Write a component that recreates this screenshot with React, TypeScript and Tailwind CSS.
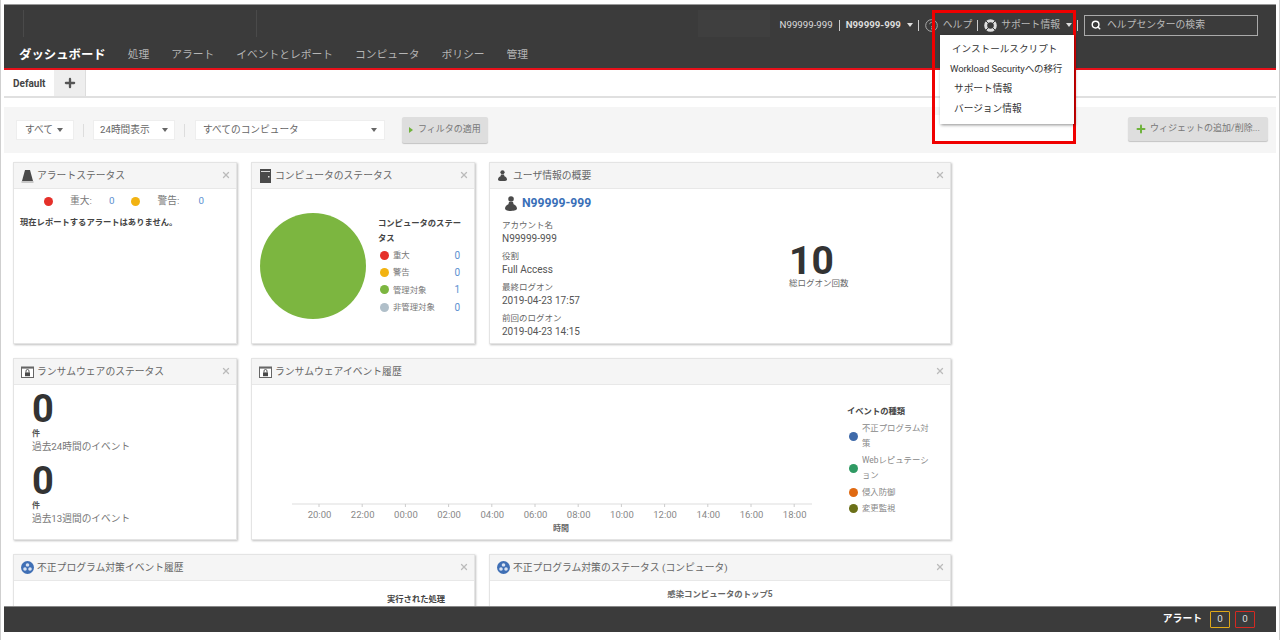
import React from "react";
import { Plus, Search, X } from "lucide-react";

const navItems = ["処理", "アラート", "イベントとレポート", "コンピュータ", "ポリシー", "管理"];
const hours = ["20:00", "22:00", "00:00", "02:00", "04:00", "06:00", "08:00", "10:00", "12:00", "14:00", "16:00", "18:00"];

const Caret = ({ className = "border-t-[#666]" }: { className?: string }) => (
  <span className={`inline-block w-0 h-0 border-x-[3.5px] border-x-transparent border-t-[4px] ${className}`} />
);

const Dot = ({ color, size = "w-[9px] h-[9px]" }: { color: string; size?: string }) => (
  <span className={`inline-block shrink-0 rounded-full ${size} ${color}`} />
);

const Sep = ({ className = "" }: { className?: string }) => (
  <span className={`w-px h-[11px] bg-[#ccc] ${className}`} />
);

const PersonIcon = ({ size = 14 }: { size?: number }) => (
  <svg width={size} height={size * 1.25} viewBox="0 0 12 15" fill="#4a4a4a">
    <circle cx="6" cy="3" r="2.8" />
    <path d="M4 6h4l.6 2.2C10.6 9 12 10.8 12 12.6 12 14.2 9.4 15 6 15s-6-.8-6-2.4c0-1.8 1.4-3.6 3.4-4.4z" />
  </svg>
);

const BellIcon = () => (
  <svg width="13" height="14" viewBox="0 0 13 14">
    <path d="M4 1h5l3 11H1z" fill="#4a4a4a" />
    <rect x="0.5" y="12.5" width="12" height="1" fill="#999" />
  </svg>
);

const ComputerIcon = () => (
  <svg width="11" height="14" viewBox="0 0 11 14">
    <rect width="11" height="14" fill="#4a4a4a" />
    <rect x="1" y="2" width="9" height="1" fill="#ddd" />
    <rect x="8" y="7" width="1.5" height="1.5" fill="#ddd" />
  </svg>
);

const LockIcon = () => (
  <svg width="13" height="12" viewBox="0 0 13 12">
    <rect x="0.5" y="1" width="12" height="10.5" fill="#fff" stroke="#666" />
    <rect x="0.5" y="1" width="12" height="1.6" fill="#666" />
    <rect x="4" y="6.4" width="5" height="3.8" fill="#4a4a4a" />
    <path d="M5 6.4V5a1.5 1.5 0 0 1 3 0v1.4" fill="none" stroke="#4a4a4a" strokeWidth="0.9" />
  </svg>
);

const BioIcon = () => (
  <svg width="13" height="13" viewBox="0 0 13 13">
    <circle cx="6.5" cy="6.5" r="6.5" fill="#3f6fb5" />
    <circle cx="6.5" cy="4" r="1.8" fill="#d8e2f2" />
    <circle cx="4" cy="8" r="1.8" fill="#d8e2f2" />
    <circle cx="9" cy="8" r="1.8" fill="#d8e2f2" />
    <circle cx="6.5" cy="6.6" r="0.9" fill="#3f6fb5" />
  </svg>
);

const LifeBuoyIcon = () => (
  <svg width="13" height="13" viewBox="0 0 13 13">
    <circle cx="6.5" cy="6.5" r="4.8" fill="none" stroke="#dedede" strokeWidth="3" />
    <path d="M2 2l2.8 2.8M11 2L8.2 4.8M2 11l2.8-2.8M11 11L8.2 8.2" stroke="#3b3b3b" strokeWidth="1" />
  </svg>
);

const HelpIcon = () => (
  <svg width="13" height="13" viewBox="0 0 13 13" fill="none" stroke="#aaa">
    <circle cx="6.5" cy="6.5" r="5.8" />
    <path d="M4.7 5.2a1.8 1.8 0 1 1 2.8 1.5c-.7.4-1 .8-1 1.6M6.5 9.3v1" />
  </svg>
);

const Widget = ({
  icon,
  title,
  className = "",
  children,
}: {
  icon: React.ReactNode;
  title: string;
  className?: string;
  children: React.ReactNode;
}) => (
  <div className={`flex flex-col bg-white border border-[#e4e4e4] shadow-[1px_1px_2px_rgba(0,0,0,0.25)] ${className}`}>
    <div className="flex items-center h-[26px] shrink-0 px-[7px] bg-[#f5f5f5] border-b border-[#e8e8e8]">
      <span className="flex justify-center items-center w-[13px] mr-[3px]">{icon}</span>
      <span className="pt-[1px] text-[9.8px] text-[#666]">{title}</span>
      <X size={10} strokeWidth={3} className="ml-auto mr-[-2px] mb-[2px] text-[#bbb]" />
    </div>
    {children}
  </div>
);

const LegendRow = ({ color, label, value }: { color: string; label: string; value: number }) => (
  <div className="flex items-center h-[17.4px] pl-[2px]">
    <Dot color={color} />
    <span className="ml-[4px] text-[8.4px] text-[#777]">{label}</span>
    <span className="ml-auto text-[10px] text-[#5b8fd0]">{value}</span>
  </div>
);

const EventLegend = ({ color, label, second }: { color: string; label: string; second?: string }) => (
  <div className="flex items-center gap-[4px] py-[0.5px]">
    <Dot color={color} />
    <span className="text-[8.4px] leading-[15.5px] text-[#888] whitespace-nowrap">
      {label}
      {second && <br />}
      {second}
    </span>
  </div>
);

const Field = ({ label, value }: { label: string; value: string }) => (
  <div className="mb-[5px]">
    <div className="text-[8.5px] leading-[13px] text-[#666]">{label}</div>
    <div className="text-[10px] leading-[13px] text-[#555]">{value}</div>
  </div>
);

const BigCount = ({ label }: { label: string }) => (
  <div className="h-[73px]">
    <div className="text-[38px] leading-[38px] -mt-[1px] font-bold text-[#333]">0</div>
    <div className="text-[8px] leading-[11px] font-bold text-[#555]">件</div>
    <div className="text-[9.7px] leading-[16px] text-[#777]">{label}</div>
  </div>
);

const EventChart = () => (
  <svg width="560" height="150" viewBox="0 0 560 150" className="shrink-0 mt-[3px]">
    <line x1="40" y1="116" x2="571" y2="116" stroke="#ddd" />
    {hours.map((h, i) => {
      const x = 67 + i * 43.2;
      return (
        <g key={h}>
          <line x1={x} y1="116" x2={x} y2="119" stroke="#ccc" />
          <text x={x + 0.5} y="130" textAnchor="middle" fontSize="9.5" fill="#888">
            {h}
          </text>
        </g>
      );
    })}
    <text x="309" y="143" textAnchor="middle" fontSize="8" fontWeight="700" fill="#666">
      時間
    </text>
  </svg>
);

const App = () => {
  return (
    <div className="relative w-[1280px] h-[640px] overflow-hidden bg-white border-x border-[#cfcfcf] font-[Roboto,'Noto_Sans_CJK_JP',sans-serif]">
      <div className="h-[632px] overflow-hidden mx-[3px] pt-[4px] flex flex-col">
        {/* Header */}
        <div className="shrink-0 h-[66px] bg-[#3b3b3b] border-t border-t-[#999] border-b-2 border-b-[#e8101a] flex flex-col">
          <div className="relative flex items-center justify-end h-[38px] pt-[2px] pr-[18px] text-[9.8px] text-[#b8b8b8]">
            <span className="absolute left-[19px] top-[5px] h-[27px] w-px bg-[#4a4a4a]" />
            <span className="absolute left-[252px] top-[5px] h-[27px] w-px bg-[#4a4a4a]" />
            <span className="absolute left-[694px] top-[5px] h-[27px] w-[72px] bg-[#3f3f3f]" />
            <span className="text-[#ddd] text-[9.7px]">N99999-999</span>
            <Sep className="mx-[6px]" />
            <span className="font-bold text-[#ddd] text-[9.7px]">N99999-999</span>
            <span className="ml-[6px] flex"><Caret className="border-t-[#ddd]" /></span>
            <Sep className="ml-[5px] mr-[6px]" />
            <span className="flex"><HelpIcon /></span>
            <span className="ml-[5px]">ヘルプ</span>
            <Sep className="ml-[5px] mr-[6px]" />
            <span className="flex"><LifeBuoyIcon /></span>
            <span className="ml-[4px]">サポート情報</span>
            <span className="ml-[6px] flex"><Caret className="border-t-[#ddd]" /></span>
            <Sep className="ml-[5px]" />
            <div className="flex items-center w-[174px] h-[21px] ml-[6px] px-[6px] border border-[#aaa]">
              <Search size={10} strokeWidth={3.5} className="text-white" />
              <span className="ml-[6px] text-[#bbb]">ヘルプセンターの検索</span>
            </div>
          </div>
          <div className="flex items-center gap-[22px] pl-[15px] h-[24px] text-[10.75px] text-[#b5b5b5]">
            <span className="text-[12.4px] font-bold text-white">ダッシュボード</span>
            {navItems.map((n) => (
              <span key={n}>{n}</span>
            ))}
          </div>
        </div>

        {/* Tabs */}
        <div className="shrink-0 flex h-[28px] border-b-2 border-[#e0e0e0]">
          <span className="flex items-center w-[50px] pl-[9px] text-[10px] font-bold text-[#444]">Default</span>
          <span className="flex items-center justify-center w-[32px] bg-[#eeeeee] border-r border-[#ddd]">
            <Plus size={14} strokeWidth={4} className="text-[#555]" />
          </span>
        </div>

        {/* Filters */}
        <div className="shrink-0 flex items-center h-[46px] mt-[9px] pl-[12px] pr-[8px] bg-[#f5f5f5] text-[9.7px] text-[#666]">
          <div className="flex items-center justify-between w-[58px] h-[20px] pl-[8px] pr-[10px] bg-white border border-[#eee]">
            すべて <Caret />
          </div>
          <span className="w-px h-[13px] mx-[9px] bg-[#ddd]" />
          <div className="flex items-center justify-between w-[82px] h-[20px] px-[6px] bg-white border border-[#eee]">
            24時間表示 <Caret />
          </div>
          <span className="w-px h-[13px] ml-[9px] mr-[10px] bg-[#ddd]" />
          <div className="flex items-center justify-between w-[190px] h-[20px] px-[7px] bg-white border border-[#eee]">
            すべてのコンピュータ <Caret />
          </div>
          <div className="flex items-center w-[86px] h-[26px] ml-[17px] pl-[7px] bg-[#dedede] rounded-[2px] shadow-[0_1px_1px_rgba(0,0,0,0.2)] text-[#777] text-[9px] whitespace-nowrap">
            <span className="w-0 h-0 mr-[5px] border-y-[3px] border-y-transparent border-l-[4px] border-l-[#6fb33c]" />
            フィルタの適用
          </div>
          <div className="flex items-center w-[140px] h-[24px] ml-auto pl-[7px] mb-[3px] bg-[#dedede] rounded-[2px] shadow-[0_1px_1px_rgba(0,0,0,0.2)] text-[#777] text-[9px] whitespace-nowrap">
            <Plus size={12} strokeWidth={4} className="mr-[3px] text-[#6fb33c]" />
            ウィジェットの追加/削除...
          </div>
        </div>

        {/* Widgets */}
        <div className="grid grid-cols-[224px_224px_462px] auto-rows-[182px] gap-[14px] mt-[9px] ml-[9px]">
          <Widget icon={<BellIcon />} title="アラートステータス">
            <div className="flex items-center h-[24px] pl-[30px] text-[9.8px] text-[#777]">
              <Dot color="bg-[#e5302a]" />
              <span className="ml-[17px]">重大:</span>
              <span className="ml-[17px] text-[#5b8fd0]">0</span>
              <span className="ml-[17px] flex"><Dot color="bg-[#f2b312]" /></span>
              <span className="ml-[17px]">警告:</span>
              <span className="ml-[19px] text-[#5b8fd0]">0</span>
            </div>
            <div className="pl-[6px] pt-[3px] text-[8.3px] font-bold text-[#444]">現在レポートするアラートはありません。</div>
          </Widget>

          <Widget icon={<ComputerIcon />} title="コンピュータのステータス">
            <div className="flex pl-[8px] pr-[14px] pt-[24px]">
              <span className="shrink-0 w-[106px] h-[106px] rounded-full bg-[#7cb640]" />
              <div className="ml-[12px] flex-1 pt-[3px]">
                <div className="-mr-[6px] text-[8.3px] leading-[15px] font-bold text-[#444]">コンピュータのステータス</div>
                <div className="mt-[0.5px]">
                  <LegendRow color="bg-[#e5302a]" label="重大" value={0} />
                  <LegendRow color="bg-[#f2b312]" label="警告" value={0} />
                  <LegendRow color="bg-[#7cb640]" label="管理対象" value={1} />
                  <LegendRow color="bg-[#b0bfc9]" label="非管理対象" value={0} />
                </div>
              </div>
            </div>
          </Widget>

          <Widget icon={<span className="-ml-[3px] flex"><PersonIcon size={9} /></span>} title="ユーザ情報の概要">
            <div className="flex h-full">
              <div className="w-[280px] pl-[12px]">
                <div className="flex items-center gap-[5px] h-[26px] pl-[3px] mb-[3px] mt-[1px]">
                  <PersonIcon size={12} />
                  <span className="text-[12.2px] font-bold text-[#3a6fb8]">N99999-999</span>
                </div>
                <Field label="アカウント名" value="N99999-999" />
                <Field label="役割" value="Full Access" />
                <Field label="最終ログオン" value="2019-04-23 17:57" />
                <Field label="前回のログオン" value="2019-04-23 14:15" />
              </div>
              <div className="pt-[53px] pl-[19px]">
                <div className="text-[39px] leading-[39px] font-bold text-[#333]">10</div>
                <div className="text-[8.5px] leading-[12px] -mt-[4px] text-[#666]">総ログオン回数</div>
              </div>
            </div>
          </Widget>

          <Widget icon={<LockIcon />} title="ランサムウェアのステータス">
            <div className="pl-[18px] pt-[6px]">
              <BigCount label="過去24時間のイベント" />
              <BigCount label="過去13週間のイベント" />
            </div>
          </Widget>

          <Widget icon={<LockIcon />} title="ランサムウェアイベント履歴" className="col-span-2">
            <div className="flex">
              <EventChart />
              <div className="ml-[35px] pt-[19px]">
                <div className="text-[8.3px] leading-[14px] font-bold text-[#444]">イベントの種類</div>
                <div className="pl-[2px] pt-[2px]">
                  <EventLegend color="bg-[#3f6aa9]" label="不正プログラム対" second="策" />
                  <EventLegend color="bg-[#2f9a63]" label="Webレピュテーシ" second="ョン" />
                  <EventLegend color="bg-[#e06a12]" label="侵入防御" />
                  <EventLegend color="bg-[#6b7018]" label="変更監視" />
                </div>
              </div>
            </div>
          </Widget>

          <Widget icon={<BioIcon />} title="不正プログラム対策イベント履歴" className="col-span-2">
            <div className="pl-[373px] pt-[12px] text-[8.3px] font-bold text-[#444]">実行された処理</div>
          </Widget>

          <Widget icon={<BioIcon />} title="不正プログラム対策のステータス (コンピュータ)">
            <div className="pt-[7px] text-center text-[8.4px] font-bold text-[#666]">感染コンピュータのトップ5</div>
          </Widget>
        </div>
      </div>

      {/* Support menu */}
      <div className="absolute left-[931px] top-[10px] w-[144px] h-[134px] border-[3px] border-[#f00000]">
        <div className="absolute left-0 right-0 top-[102px] bottom-0 bg-white" />
        <div className="absolute left-[5px] top-[22px] w-[134px] h-[89px] flex flex-col bg-white shadow-[1px_1px_3px_rgba(0,0,0,0.45)] text-[9.7px] leading-[20px] text-[#333] pt-[4px]">
          <span className="pl-[12px] text-[9.6px]">インストールスクリプト</span>
          <span className="pl-[10px] text-[9.5px] tracking-[-0.1px]">Workload Securityへの移行</span>
          <span className="pl-[14px]">サポート情報</span>
          <span className="pl-[14px]">バージョン情報</span>
        </div>
      </div>

      {/* Footer */}
      <div className="absolute left-[3px] right-[3px] top-[606px] h-[26px] flex items-center justify-end pr-[21px] bg-[#3b3b3b] border-t border-[#888] text-[9.8px] text-[#ddd]">
        <span className="font-bold text-white">アラート</span>
        <span className="flex items-center justify-center w-[20px] h-[17px] ml-[8px] border-[1.5px] border-[#e0a818] rounded-[1px]">0</span>
        <span className="flex items-center justify-center w-[20px] h-[17px] ml-[5px] border-[1.5px] border-[#d42a22] rounded-[1px]">0</span>
      </div>
    </div>
  );
};

export default App;
